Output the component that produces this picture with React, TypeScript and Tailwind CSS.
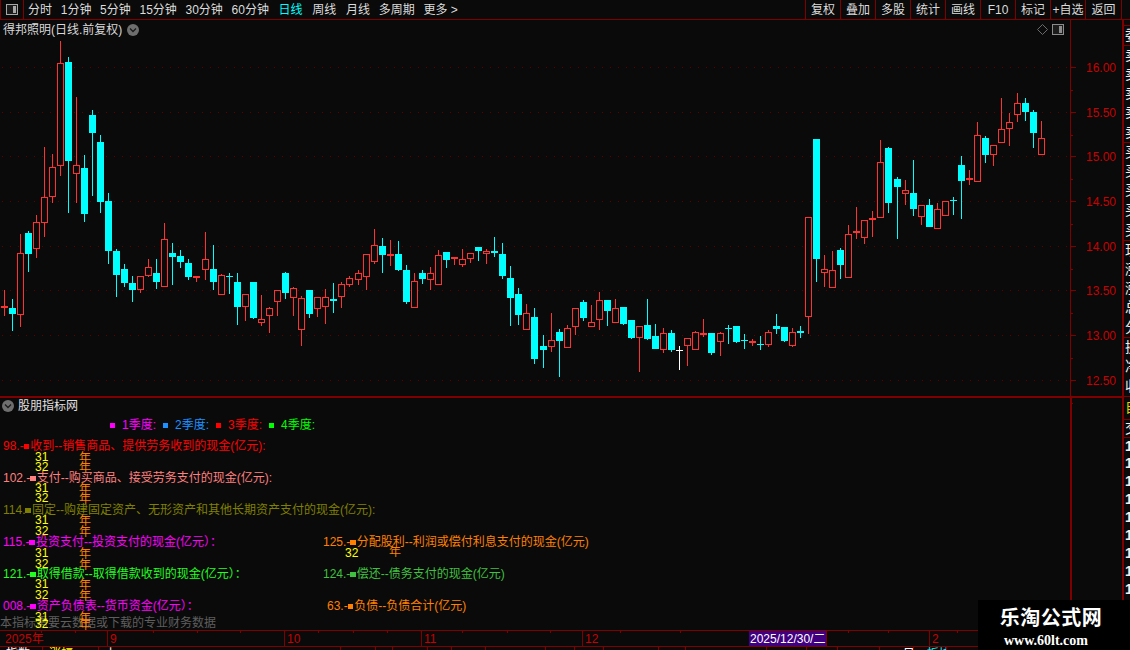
import { Fragment } from 'react';

const LINE = 'border-[#800000]';

// indicator text: the ■ marker is a small half width square
const T = ({ s }: { s: string }) => (
  <>
    {s.split(/(■)/).map((part, i) =>
      part === '■' ? (
        <span key={i} className="inline-block w-[5.5px] h-[5.5px] align-[1px] mr-[1px] bg-current" />
      ) : (
        <Fragment key={i}>{part}</Fragment>
      ),
    )}
  </>
);

// high, body top, body bottom, low, kind
type Candle = [number, number, number, number, string];
const candles: Candle[] = [
  [290, 306, 308, 316, 'r'], [299, 308, 314, 331, 'c'], [234, 253, 315, 327, 'r'], [231, 233, 254, 272, 'c'],
  [215, 222, 249, 258, 'r'], [147, 197, 223, 237, 'r'], [154, 167, 197, 203, 'r'], [41, 63, 166, 176, 'r'],
  [57, 62, 161, 213, 'c'], [97, 165, 174, 203, 'r'], [155, 168, 214, 222, 'c'], [110, 115, 133, 196, 'c'],
  [135, 142, 202, 213, 'c'], [193, 201, 251, 264, 'c'], [249, 251, 275, 297, 'c'], [264, 269, 283, 287, 'c'],
  [276, 283, 290, 302, 'c'], [276, 276, 290, 293, 'r'], [259, 267, 276, 277, 'r'], [259, 273, 282, 289, 'c'],
  [223, 239, 287, 287, 'r'], [243, 253, 257, 285, 'c'], [250, 256, 262, 268, 'c'], [259, 263, 277, 280, 'c'],
  [276, 276, 278, 282, 'r'], [232, 259, 270, 280, 'r'], [245, 269, 282, 290, 'c'], [274, 275, 295, 295, 'r'],
  [273, 276, 277, 294, 'c'], [273, 282, 307, 325, 'c'], [294, 294, 307, 321, 'r'], [282, 282, 318, 319, 'c'],
  [295, 319, 323, 326, 'r'], [307, 308, 316, 333, 'r'], [290, 290, 302, 316, 'r'], [272, 273, 293, 299, 'c'],
  [287, 288, 298, 316, 'r'], [296, 298, 330, 346, 'r'], [290, 290, 314, 318, 'c'], [297, 297, 309, 317, 'r'],
  [289, 297, 307, 324, 'r'], [283, 299, 301, 313, 'c'], [282, 284, 297, 308, 'r'], [276, 278, 285, 287, 'r'],
  [270, 273, 280, 285, 'r'], [254, 254, 277, 290, 'r'], [229, 245, 262, 264, 'r'], [238, 246, 255, 273, 'c'],
  [240, 254, 256, 266, 'r'], [241, 254, 270, 271, 'c'], [265, 270, 302, 304, 'c'], [273, 281, 308, 308, 'r'],
  [270, 273, 279, 284, 'c'], [267, 273, 280, 290, 'r'], [250, 255, 285, 285, 'r'], [252, 252, 260, 268, 'c'],
  [257, 257, 259, 265, 'r'], [249, 259, 265, 267, 'r'], [253, 253, 259, 263, 'r'], [247, 247, 251, 261, 'c'],
  [249, 251, 254, 264, 'r'], [237, 251, 253, 257, 'c'], [243, 254, 276, 279, 'c'], [266, 278, 298, 326, 'c'],
  [288, 294, 315, 325, 'c'], [304, 313, 330, 330, 'r'], [308, 317, 359, 364, 'c'], [335, 346, 350, 368, 'c'],
  [313, 340, 347, 352, 'r'], [329, 332, 341, 377, 'c'], [325, 328, 348, 348, 'r'], [308, 308, 327, 335, 'r'],
  [300, 302, 318, 321, 'c'], [305, 322, 327, 327, 'r'], [292, 300, 320, 330, 'r'], [300, 300, 311, 326, 'c'],
  [299, 308, 323, 323, 'r'], [307, 307, 324, 325, 'c'], [320, 320, 338, 339, 'c'], [326, 326, 338, 372, 'r'],
  [299, 325, 339, 340, 'c'], [324, 336, 349, 349, 'c'], [328, 333, 350, 353, 'r'], [330, 333, 350, 352, 'c'],
  [346, 350, 351, 370, 'w'], [338, 338, 346, 366, 'r'], [331, 332, 350, 350, 'r'], [319, 333, 335, 337, 'r'],
  [333, 333, 353, 355, 'c'], [332, 333, 342, 356, 'r'], [325, 328, 329, 344, 'c'], [326, 326, 342, 343, 'c'],
  [334, 340, 341, 349, 'c'], [339, 341, 343, 346, 'r'], [336, 344, 345, 350, 'c'], [330, 332, 345, 347, 'r'],
  [314, 326, 329, 334, 'c'], [327, 327, 341, 342, 'c'], [328, 332, 346, 347, 'r'], [326, 331, 333, 338, 'c'],
  [217, 217, 317, 334, 'r'], [139, 139, 259, 282, 'c'], [255, 269, 273, 287, 'r'], [251, 270, 288, 288, 'r'],
  [248, 250, 265, 279, 'c'], [225, 234, 278, 278, 'r'], [207, 231, 233, 239, 'r'], [220, 220, 238, 244, 'r'],
  [211, 218, 220, 237, 'r'], [140, 162, 218, 218, 'r'], [147, 148, 203, 213, 'c'], [177, 179, 187, 239, 'c'],
  [180, 190, 194, 205, 'r'], [160, 193, 209, 216, 'c'], [205, 205, 217, 225, 'r'], [199, 205, 227, 227, 'c'],
  [203, 209, 229, 229, 'r'], [201, 201, 216, 216, 'r'], [197, 200, 201, 215, 'c'], [156, 165, 181, 219, 'c'],
  [170, 178, 180, 185, 'r'], [122, 135, 182, 182, 'r'], [136, 138, 155, 163, 'c'], [145, 145, 155, 166, 'r'],
  [98, 129, 143, 143, 'r'], [113, 122, 129, 146, 'r'], [93, 103, 115, 122, 'r'], [98, 103, 112, 121, 'c'],
  [110, 112, 133, 148, 'c'], [121, 138, 155, 155, 'r'],
];

const candleX = (i: number) =>
  4 + 8 * i + [25, 44, 67, 89, 111].filter((n) => i >= n).length;

const prices: [string, number][] = [
  ['16.00', 67], ['15.50', 112], ['15.00', 156], ['14.50', 201],
  ['14.00', 246], ['13.50', 290], ['13.00', 335], ['12.50', 380],
];

const tabs = ['分时', '1分钟', '5分钟', '15分钟', '30分钟', '60分钟', '日线', '周线', '月线', '多周期', '更多 >'];
const tools = ['复权', '叠加', '多股', '统计', '画线', 'F10', '标记', '+自选', '返回'];

const Chevron = () => (
  <svg width="12" height="12" viewBox="0 0 12 12" className="block shrink-0">
    <circle cx="6" cy="6" r="6" fill="#6e6e6e" />
    <path d="M3 4.5 L6 7.5 L9 4.5" fill="none" stroke="#1a1a1a" strokeWidth="1.3" />
  </svg>
);

const PaneIcon = ({ c = '#a8a8a8' }: { c?: string }) => (
  <svg width="12" height="11" viewBox="0 0 12 11" className="block" shapeRendering="crispEdges">
    <rect x="0.5" y="0.5" width="11" height="10" rx="1" fill="#1c1c1c" stroke={c} />
    <rect x="7" y="2" width="3" height="7" fill={c} />
  </svg>
);

const Chart = () => (
  <svg viewBox="0 20 1070 376" className="block w-[1070px] h-[376px]" shapeRendering="crispEdges">
    {prices.map(([p, y]) => (
      <line key={p} x1="2" x2="1070" y1={y + 0.5} y2={y + 0.5} stroke="#600000" strokeDasharray="1 7" />
    ))}
    {candles.map(([hi, top, bot, lo, kind], i) => {
      const x = candleX(i);
      if (kind === 'r') {
        return (
          <g key={i} fill="#ff3232">
            <rect x={x} y={hi} width="1" height={Math.max(top - hi, 0)} />
            <rect x={x} y={bot} width="1" height={Math.max(lo - bot, 0)} />
            <rect x={x - 2.5} y={top + 0.5} width="6" height={Math.max(bot - top - 1, 1)} fill="#0a0a0a" stroke="#ff3232" />
          </g>
        );
      }
      const color = kind === 'w' ? '#ffffff' : '#00ffff';
      return (
        <g key={i} fill={color}>
          <rect x={x} y={hi} width="1" height={lo - hi} />
          <rect x={x - 3} y={top} width="7" height={bot - top} />
        </g>
      );
    })}
  </svg>
);

const PriceAxis = () => (
  <div className={'relative w-[52px] h-full border-l ' + LINE}>
    {prices.map(([p, y]) => (
      <Fragment key={p}>
        <span className="absolute left-0 w-[5px] h-px bg-[#800000]" style={{ top: y - 20 }} />
        <span className="absolute left-0 w-[2px] h-px bg-[#800000]" style={{ top: y - 20 + 23 }} />
        <span className="absolute left-[15px] text-[#c80000] leading-[14px]" style={{ top: y - 26 }}>
          {p}
        </span>
      </Fragment>
    ))}
  </div>
);

const labels: { x: number; y: number; c: string; s: string }[] = [
  { x: 3, y: 445, c: 'text-[#ff0000]', s: '98.-■收到--销售商品、提供劳务收到的现金(亿元):' },
  { x: 3, y: 477, c: 'text-[#ff8080]', s: '102.-■支付--购买商品、接受劳务支付的现金(亿元):' },
  { x: 3, y: 509, c: 'text-[#808000]', s: '114.■固定--购建固定资产、无形资产和其他长期资产支付的现金(亿元):' },
  { x: 3, y: 541, c: 'text-[#ff00ff]', s: '115.-■投资支付--投资支付的现金(亿元）：' },
  { x: 323, y: 541, c: 'text-[#ff8000]', s: '125.-■分配股利--利润或偿付利息支付的现金(亿元)' },
  { x: 3, y: 573, c: 'text-[#20ff20]', s: '121.-■取得借款--取得借款收到的现金(亿元）：' },
  { x: 323, y: 573, c: 'text-[#40c040]', s: '124.-■偿还--债务支付的现金(亿元)' },
  { x: 3, y: 605, c: 'text-[#ff00ff]', s: '008.-■资产负债表--货币资金(亿元）：' },
  { x: 327, y: 605, c: 'text-[#ff8000]', s: '63.-■负债--负债合计(亿元)' },
];

const days: [string, number][] = [
  ['31', 456], ['32', 466], ['31', 487], ['32', 497], ['31', 519], ['32', 530],
  ['31', 552], ['32', 563], ['31', 583], ['32', 594], ['31', 616], ['32', 623],
];

const quarters = [
  { s: '1季度:', sq: 'bg-[#ff00ff]', c: 'text-[#ff00ff]' },
  { s: '2季度:', sq: 'bg-[#1e90ff]', c: 'text-[#1e90ff]' },
  { s: '3季度:', sq: 'bg-[#ff0000]', c: 'text-[#ff0000]' },
  { s: '4季度:', sq: 'bg-[#00ff00]', c: 'text-[#00ff00]' },
];

const Indicator = () => (
  <div className="relative w-[1070px] h-full overflow-hidden">
    <div className="flex items-center gap-[4px] pl-[2px] pt-[1px] h-[14px] text-[#e0e0e0] leading-[14px]">
      <Chevron />
      <span>股朋指标网</span>
    </div>
    <div className="flex items-center gap-[7px] pl-[110px] mt-[6px] h-[14px] leading-[14px]">
      {quarters.map((q) => (
        <div key={q.s} className={'flex items-center gap-[7px] ' + q.c}>
          <span className={'w-[5px] h-[5px] ' + q.sq} />
          <span>{q.s}</span>
        </div>
      ))}
    </div>
    {labels.map((l) => (
      <div key={l.s} className={'absolute whitespace-nowrap leading-[14px] ' + l.c} style={{ left: l.x, top: l.y - 404 }}>
        <T s={l.s} />
      </div>
    ))}
    <div className="absolute left-0 top-[218px] text-[#5e5e5e] leading-[14px]">本指标需要云数据或下载的专业财务数据</div>
    {days.map(([d, y], i) => (
      <Fragment key={i}>
        <span className="absolute left-[79px] text-[#ff8000] leading-[14px]" style={{ top: y - 403 }}>年</span>
        <span className="absolute left-[35px] text-[#ffff00] leading-[14px]" style={{ top: y - 404 }}>{d}</span>
      </Fragment>
    ))}
    <span className="absolute left-[345px] top-[148px] text-[#ffff00] leading-[14px]">32</span>
    <span className="absolute left-[389px] top-[147px] text-[#ff8000] leading-[14px]">年</span>
  </div>
);

const months: [string, number][] = [['9', 107], ['10', 284], ['11', 421], ['12', 582], ['2', 929]];
const ticks = [41, 75, 153, 197, 240, 318, 353, 387, 462, 507, 550, 620, 680, 848, 888, 957];

const TimeAxis = () => (
  <div className={'relative h-[16px] border-t ' + LINE + ' text-[#c80000] leading-[16px]'}>
    <span className="absolute left-[5px] top-0">2025年</span>
    {ticks.map((x) => (
      <span key={x} className="absolute top-0 w-px h-[2px] bg-[#800000]" style={{ left: x }} />
    ))}
    {months.map(([m, x]) => (
      <div key={m} className={'absolute top-0 h-full pl-[2px] border-l ' + LINE} style={{ left: x }}>
        {m}
      </div>
    ))}
    <div className="absolute left-[749px] top-0 w-[78px] h-full bg-[#400080] border-r border-[#800000] text-white pl-[1px] whitespace-nowrap">
      2025/12/30/二
    </div>
  </div>
);

const sideRows: { ch: string; h: string; c?: string; line?: boolean }[] = [
  { ch: '', h: 'h-[5px]' },
  { ch: '委', h: 'h-[20px]', line: true },
  ...['卖', '卖', '卖', '卖', '卖'].map((ch, i) => ({ ch, h: 'h-[19.4px]', line: i === 0 })),
  ...['买', '买', '买', '买', '买'].map((ch, i) => ({ ch, h: 'h-[19.6px]', line: i === 0 })),
  ...['现', '涨', '涨', '总', '分'].map((ch, i) => ({ ch, h: 'h-[19.4px]', line: i === 0 })),
  ...['换', '净', '收'].map((ch, i) => ({ ch, h: 'h-[19.7px]', line: i === 0 })),
  { ch: '自', h: 'h-[23px]', c: 'text-[#d8d800]', line: true },
  { ch: '交', h: 'h-[18px]', line: true },
  ...Array.from({ length: 12 }, (_, i) => ({ ch: '1', h: 'h-[18px]', line: i === 0 })),
];

const SidePanel = () => (
  <div className={'w-[8px] h-full border-l-2 overflow-hidden ' + LINE}>
    {sideRows.map((r, i) => (
      <div
        key={i}
        className={
          'flex items-center overflow-hidden text-[14px] pl-[1px] ' +
          (r.ch === '1' ? 'font-bold ' : '') +
          r.h + ' ' + (r.c ?? 'text-[#f0f0f0]') + (r.line ? ' border-t ' + LINE : '')
        }
      >
        {r.ch}
      </div>
    ))}
  </div>
);

const statusCells: { x: number; s?: string; c?: string }[] = [
  { x: 42, s: '指数', c: 'text-white' }, { x: 97, s: '涨幅', c: 'text-[#ffff00]' }, { x: 338, s: '上', c: 'text-white' },
  { x: 372 }, { x: 388 }, { x: 422 }, { x: 445 }, { x: 478 }, { x: 537 }, { x: 565 }, { x: 593 },
  { x: 647 }, { x: 673 }, { x: 753 }, { x: 792 }, { x: 822 }, { x: 863 }, { x: 896, s: '     日', c: 'text-white' },
  { x: 928, s: '  板块', c: 'text-[#00ffff]' },
];

const StatusRow = () => (
  <div className={'flex h-[4px] border-t overflow-hidden shrink-0 ' + LINE}>
    {statusCells.map((c, i) => (
      <div
        key={i}
        className={'shrink-0 h-full border-r whitespace-pre overflow-hidden leading-[15px] pl-[6px] ' + LINE + ' ' + (c.c ?? '')}
        style={{ width: c.x - (i ? statusCells[i - 1].x : 0) + 1 }}
      >
        {c.s}
      </div>
    ))}
  </div>
);

export default function App() {
  return (
    <div className="relative flex flex-col w-[1130px] h-[650px] overflow-hidden bg-[#0a0a0a] text-[12px] [font-family:'Liberation_Sans','Noto_Sans_CJK_SC',sans-serif]">
      {/* top toolbar */}
      <div className={'flex items-stretch h-[20px] shrink-0 border-b text-[#dcdcdc] ' + LINE}>
        <div className={'flex items-center justify-center w-[24px] border-x ' + LINE}>
          <PaneIcon />
        </div>
        <div className="flex items-center gap-[8.7px] pl-[4px] pt-[1px] leading-[19px]">
          {tabs.map((t) => (
            <span
              key={t}
              className={(t === '日线' ? 'text-[#00ffff] ml-[1px]' : t === '周线' || t === '月线' ? 'ml-[1px]' : '')}
            >
              {t}
            </span>
          ))}
        </div>
        <div className="flex ml-auto mr-[8px]">
          {tools.map((t) => (
            <div key={t} className={'flex items-center justify-center w-[35px] pt-[1px] border-l last:border-r last:w-[37px] ' + LINE}>
              {t}
            </div>
          ))}
        </div>
      </div>

      <div className="flex flex-1 min-h-0">
        <div className="flex flex-col w-[1122px]">
          {/* kline pane */}
          <div className={'relative flex h-[378px] shrink-0 border-b-2 ' + LINE}>
            <Chart />
            <PriceAxis />
            <div className="absolute left-[3px] top-[3px] flex items-center gap-[5px] text-[#d8d8d8] leading-[14px]">
              <span>得邦照明(日线.前复权)</span>
              <Chevron />
            </div>
            <div className="absolute left-[1037px] top-[4px] flex items-center gap-[4px]">
              <svg width="11" height="11" viewBox="0 0 11 11" className="block">
                <path d="M5.5 0.5 L10.5 5.5 L5.5 10.5 L0.5 5.5 Z" fill="none" stroke="#6a6a6a" />
              </svg>
              <PaneIcon c="#8c8c8c" />
            </div>
          </div>

          {/* indicator pane */}
          <div className="flex flex-1 min-h-0">
            <Indicator />
            <div className={'w-[52px] h-full border-l-2 ' + LINE} />
          </div>

          <TimeAxis />
        </div>
        <SidePanel />
      </div>

      <StatusRow />

      {/* site watermark over the corner */}
      <div className="absolute right-0 bottom-0 flex flex-col items-center w-[152px] h-[50px] bg-black text-white pt-[4px] pr-[6px]">
        <div className="text-[20px] font-bold leading-[28px] tracking-[0.5px]">乐淘公式网</div>
        <div className="text-[14px] font-bold leading-[16px] mt-[1px] mr-[10px] [font-family:'Liberation_Serif',serif]">www.60lt.com</div>
      </div>
    </div>
  );
}
